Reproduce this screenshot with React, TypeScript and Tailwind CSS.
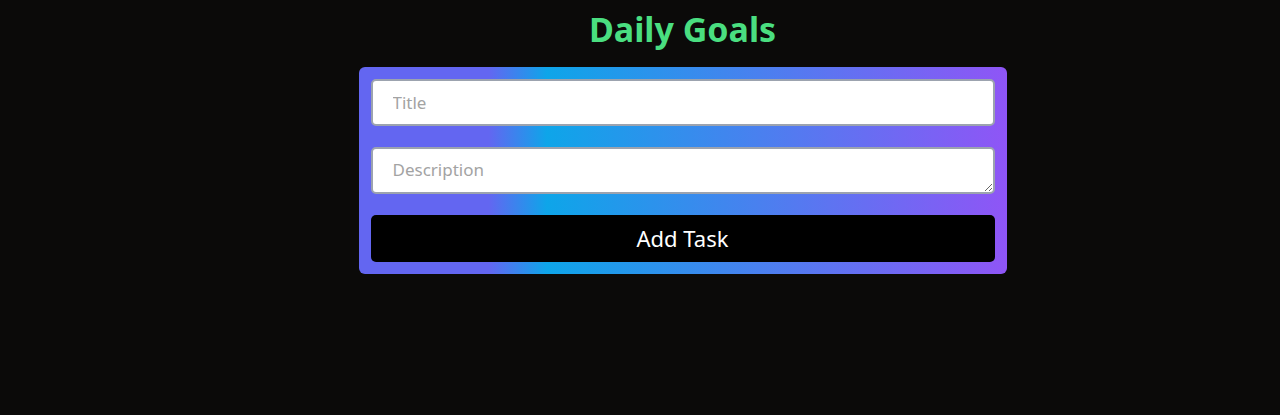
export default function App() {
  return (
    <div className="min-h-[415px] w-full bg-[#0b0a09] font-['Noto_Sans',sans-serif]">
      <div className="flex flex-col items-center pt-[8px] pl-[85px]">
        <h1 className="text-[34px] font-bold leading-[42px] text-[#4ade80]">Daily Goals</h1>
        <form
          className="mt-[17px] flex w-[648px] flex-col rounded-[6px] bg-linear-to-r/srgb from-[#6366f1] from-20% via-[#0ea5e9] via-29% to-[#8f55f6] p-[12px]"
          onSubmit={(e) => e.preventDefault()}
        >
          <input
            type="text"
            placeholder="Title"
            className="h-[47px] rounded-[5px] border-2 border-[#9ca3af] bg-white px-[20px] text-[17px] text-black outline-none placeholder:text-[#a3a3a3]"
          />
          <textarea
            placeholder="Description"
            className="mt-[21px] block h-[47px] min-h-[47px] rounded-[5px] border-2 border-[#9ca3af] bg-white px-[20px] py-[10px] text-[17px] leading-[22px] text-black outline-none placeholder:text-[#a3a3a3]"
          />
          <button
            type="submit"
            className="mt-[21px] h-[47px] rounded-[5px] bg-black text-[22px] text-white"
          >
            Add Task
          </button>
        </form>
      </div>
    </div>
  );
}
